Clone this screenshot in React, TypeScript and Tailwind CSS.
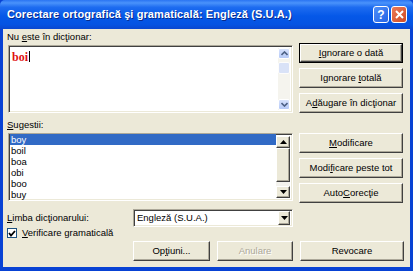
import React from 'react';

const raised =
  'bg-[#ECE9D8] border border-t-white border-l-white border-r-[#404040] border-b-[#404040] shadow-[inset_-1px_-1px_0_#ACA899]';
const sunken =
  'border border-t-[#ACA899] border-l-[#ACA899] border-r-white border-b-white shadow-[inset_1px_1px_0_#404040,inset_-1px_-1px_0_#ECE9D8]';

interface BtnProps {
  children: React.ReactNode;
  w: string;
  isDefault?: boolean;
  disabled?: boolean;
}

const Btn: React.FC<BtnProps> = ({ children, w, isDefault, disabled }) => {
  const label = (
    <div
      className={`${raised} flex h-full w-full items-center justify-center ${
        disabled ? 'text-[#ACA899] [text-shadow:1px_1px_0_#fff]' : 'text-black'
      }`}
    >
      {children}
    </div>
  );
  return (
    <div className={`${w} h-[20px] shrink-0 ${isDefault ? 'border border-black' : ''}`}>{label}</div>
  );
};

const XpArrow = ({ up }: { up?: boolean }) => (
  <div className="flex h-[11px] w-full items-center justify-center rounded-[2px] border border-white bg-gradient-to-b from-[#D7E2FC] to-[#B5C9F7]">
    <svg width="7" height="5" viewBox="0 0 7 5">
      <path
        d={up ? 'M0.5 4 L3.5 1 L6.5 4' : 'M0.5 1 L3.5 4 L6.5 1'}
        fill="none"
        stroke="#4D6185"
        strokeWidth="1.6"
      />
    </svg>
  </div>
);

const ClassicArrow = ({ up }: { up?: boolean }) => (
  <div className={`${raised} flex h-[12px] w-full items-center justify-center`}>
    <svg width="7" height="4" viewBox="0 0 7 4">
      <path d={up ? 'M0 4 L3.5 0 L7 4 Z' : 'M0 0 L3.5 4 L7 0 Z'} fill="#000" />
    </svg>
  </div>
);

const suggestions = ['boy', 'boil', 'boa', 'obi', 'boo', 'buy'];

export default function App() {
  return (
    <div className='flex h-[271px] w-[413px] flex-col bg-[#0842D4] font-["Liberation_Sans",Arial,sans-serif] text-[9.5px] text-black'>
      {/* title bar */}
      <div className="flex h-[29px] shrink-0 items-center rounded-t-[5px] bg-[linear-gradient(to_bottom,#2A74F2_0%,#4A93FB_10%,#1E6CF0_25%,#0558E8_55%,#0553E2_85%,#0A47CF_100%)] pl-[7px] pr-[6px]">
        <span className="flex-1 text-[11px] font-bold tracking-[0.1px] text-white [text-shadow:1px_1px_0_#0A2A8A]">
          Corectare ortografică şi gramaticală: Engleză (S.U.A.)
        </span>
        <div className="flex gap-[2px]">
          <div className="flex h-[17px] w-[16px] items-center justify-center rounded-[3px] border border-white bg-gradient-to-br from-[#4F8FF8] to-[#2563E6] text-[12px] font-bold leading-none text-white">
            ?
          </div>
          <div className="flex h-[17px] w-[16px] items-center justify-center rounded-[3px] border border-white bg-gradient-to-br from-[#EB7A57] to-[#D04A22]">
            <svg width="9" height="9" viewBox="0 0 9 9">
              <path d="M1 1 L8 8 M8 1 L1 8" stroke="#fff" strokeWidth="2" />
            </svg>
          </div>
        </div>
      </div>

      {/* body */}
      <div className="mx-[3px] mb-[4px] flex flex-1 flex-col bg-[#ECE9D8] pl-[4px] pr-[5px]">
        <div className="flex">
          {/* left column */}
          <div className="flex w-[286px] flex-col">
            <div className="h-[16px] pt-[2px] leading-[12px]">
              Nu <u>e</u>ste în dicţionar:
            </div>
            <div className={`${sunken} ml-[1px] flex h-[68px] bg-white`}>
              <div className="flex-1 pl-[3px] pt-[2px]">
                <span className='font-["Liberation_Serif","Times_New_Roman",serif] text-[12px] font-bold text-[#E01010]'>
                  boi
                </span>
                <span className="ml-[1px] inline-block h-[11px] w-[1px] translate-y-[1px] bg-black" />
              </div>
              <div className="my-[2px] mr-[2px] flex w-[12px] flex-col bg-[#F5F4EE]">
                <XpArrow up />
                <div className="mt-[3px] h-[12px] rounded-[2px] border border-white bg-[#D3DEFA] opacity-80" />
                <div className="flex-1" />
                <XpArrow />
              </div>
            </div>
            <div className="h-[20px] pt-[6px] leading-[12px]">
              <u>S</u>ugestii:
            </div>
            <div className={`${sunken} ml-[1px] flex h-[68px] overflow-hidden bg-white`}>
              <div className="flex-1 pl-[1px]">
                {suggestions.map((s, i) => (
                  <div
                    key={s}
                    className={`h-[11px] pl-[1px] leading-[11px] ${
                      i === 0 ? 'bg-[#316AC5] text-white' : ''
                    }`}
                  >
                    {s}
                  </div>
                ))}
              </div>
              <div className="my-[2px] mr-[2px] flex w-[14px] flex-col bg-[#F4F3EE]">
                <ClassicArrow up />
                <div className={`${raised} h-[34px]`} />
                <div className="flex-1" />
                <ClassicArrow />
              </div>
            </div>
          </div>

          {/* right column */}
          <div className="ml-[6px] flex flex-col pt-[14px]">
            <div className="flex flex-col gap-[5px]">
              <Btn w="w-[104px]" isDefault>
                <span>
                  <u>I</u>gnorare o dată
                </span>
              </Btn>
              <Btn w="w-[104px]">
                <span>
                  Ignorare <u>t</u>otală
                </span>
              </Btn>
              <Btn w="w-[104px]">
                <span>
                  A<u>d</u>ăugare în dicţionar
                </span>
              </Btn>
            </div>
            <div className="mt-[20px] flex flex-col gap-[5px]">
              <Btn w="w-[104px]">
                <span>
                  <u>M</u>odificare
                </span>
              </Btn>
              <Btn w="w-[104px]">
                <span>
                  Modi<u>f</u>icare peste tot
                </span>
              </Btn>
              <Btn w="w-[104px]">
                <span>
                  Auto<u>C</u>orecţie
                </span>
              </Btn>
            </div>
          </div>
        </div>

        {/* bottom section */}
        <div className="mt-[6px] flex h-[18px] items-center">
          <div className="w-[126px]">
            <u>L</u>imba dicţionarului:
          </div>
          <div className={`${sunken} flex h-[18px] w-[160px] items-center bg-white`}>
            <span className="flex-1 pl-[3px]">Engleză (S.U.A.)</span>
            <div className="mr-[2px] h-[14px] w-[12px]">
              <div className={`${raised} flex h-full w-full items-center justify-center`}>
                <svg width="7" height="4" viewBox="0 0 7 4">
                  <path d="M0 0 L3.5 4 L7 0 Z" fill="#000" />
                </svg>
              </div>
            </div>
          </div>
        </div>
        <div className="mt-[1px] flex h-[10px] items-center">
          <div className="flex h-[10px] w-[10px] items-center justify-center border border-[#1C5180] bg-white">
            <svg width="8" height="7" viewBox="0 0 8 7">
              <path d="M1 3 L3 5.5 L7 1" fill="none" stroke="#000" strokeWidth="1.8" />
            </svg>
          </div>
          <span className="ml-[5px]">
            <u>V</u>erificare gramaticală
          </span>
        </div>
        <div className="mt-[3px] flex">
          <div className="w-[126px]" />
          <Btn w="w-[77px]">
            <span>
              Op<u>ţ</u>iuni...
            </span>
          </Btn>
          <div className="ml-[7px]">
            <Btn w="w-[76px]" disabled>
              Anulare
            </Btn>
          </div>
          <div className="ml-[7px]">
            <Btn w="w-[104px]">Revocare</Btn>
          </div>
        </div>
      </div>
    </div>
  );
}
